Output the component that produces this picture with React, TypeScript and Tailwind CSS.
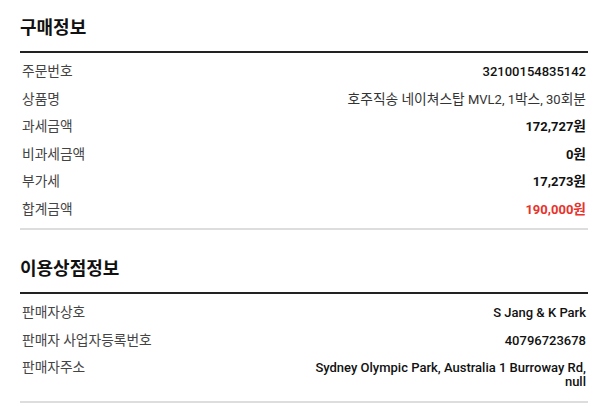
const font = { fontFamily: '"Roboto", "Noto Sans CJK KR", sans-serif' };

type Row = { label: string; value: string; kind: "medium" | "regular" | "bold" | "red"; wrap?: boolean };

const purchase: Row[] = [
  { label: "주문번호", value: "32100154835142", kind: "medium" },
  { label: "상품명", value: "호주직송 네이쳐스탑 MVL2, 1박스, 30회분", kind: "regular" },
  { label: "과세금액", value: "172,727원", kind: "bold" },
  { label: "비과세금액", value: "0원", kind: "bold" },
  { label: "부가세", value: "17,273원", kind: "bold" },
  { label: "합계금액", value: "190,000원", kind: "red" },
];

const store: Row[] = [
  { label: "판매자상호", value: "S Jang & K Park", kind: "medium" },
  { label: "판매자 사업자등록번호", value: "40796723678", kind: "medium" },
  { label: "판매자주소", value: "Sydney Olympic Park, Australia 1 Burroway Rd, null", kind: "medium", wrap: true },
];

const valueClass = {
  medium: "font-medium text-[#111]",
  regular: "font-normal text-[#333]",
  bold: "font-bold text-[#111]",
  red: "font-bold text-[#e8322b]",
};

// hangul in the reference is set a touch wider than latin text
const Ko = ({ text }: { text: string }) => (
  <>
    {text.split(/([가-힣]+)/).map((part, i) =>
      /[가-힣]/.test(part) ? (
        <span key={i} className="text-[13.75px]">
          {part}
        </span>
      ) : (
        part
      )
    )}
  </>
);

const Section = ({ title, rows, top }: { title: string; rows: Row[]; top: string }) => (
  <section className={top}>
    <h2 className="text-[18px] leading-[24px] font-bold text-[#111] mb-[11px]">{title}</h2>
    <div className="border-t-2 border-[#222] border-b-2 border-b-[#ddd] pt-[5px] pb-[5px]">
      {rows.map((row) => (
        <div key={row.label} className="flex justify-between items-start py-1 pl-[2px] pr-[2px] text-[13px]">
          <span className="leading-[19.5px] text-[#444]">
            <Ko text={row.label} />
          </span>
          <span
            className={`max-w-[50%] text-right ${valueClass[row.kind]} ${
              row.wrap ? "leading-[14px] pt-[3px] pb-[3px]" : "leading-[19.5px]"
            }`}
          >
            <Ko text={row.value} />
          </span>
        </div>
      ))}
    </div>
  </section>
);

export default function App() {
  return (
    <div className="w-[605px] h-[406px] bg-white pl-5 pr-[17px] overflow-hidden" style={font}>
      <Section title="구매정보" rows={purchase} top="pt-4" />
      <Section title="이용상점정보" rows={store} top="pt-[27px]" />
    </div>
  );
}
